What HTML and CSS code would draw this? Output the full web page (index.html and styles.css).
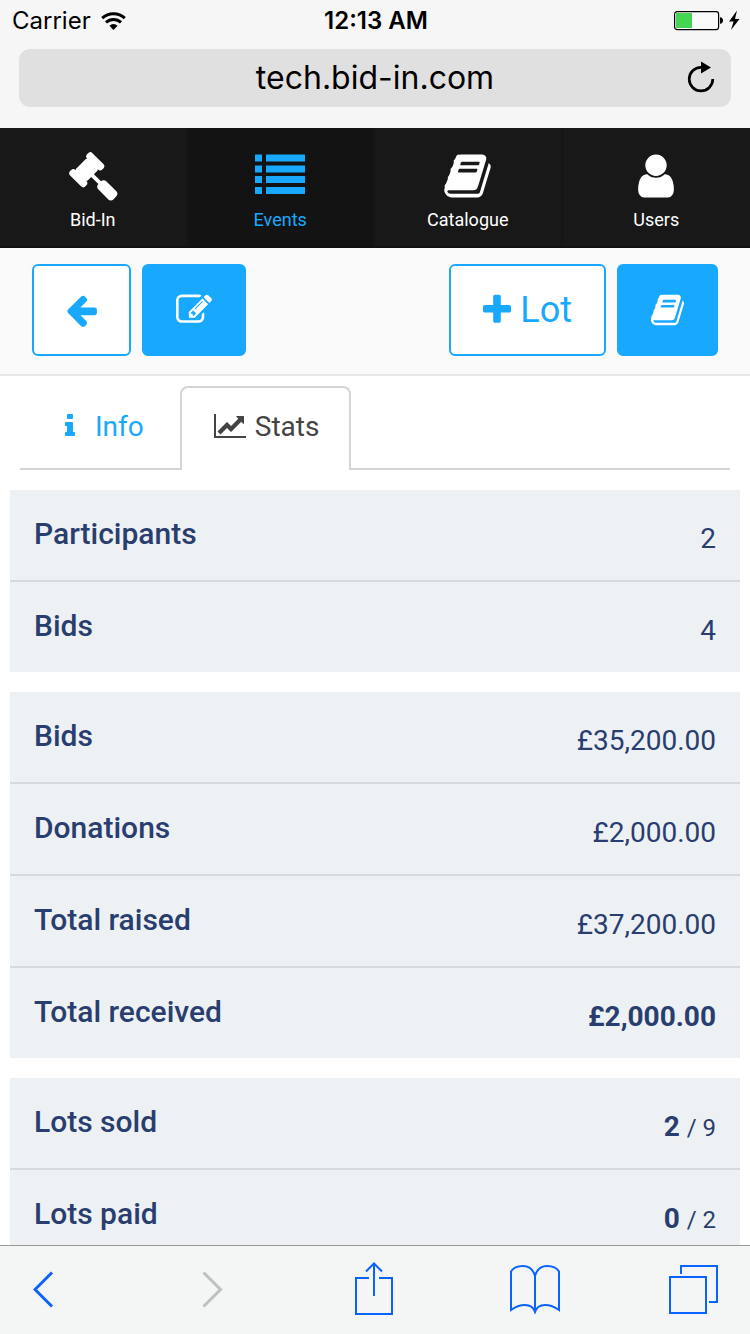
FILE: index.html
```html
<!DOCTYPE html>
<html lang="en">
<head>
<meta charset="utf-8">
<meta name="viewport" content="width=device-width, initial-scale=1">
<title>Bid-In – Event stats</title>
<link rel="stylesheet" href="styles.css">
</head>
<body>
<svg class="sprite" aria-hidden="true">
  <symbol id="book" viewBox="64 0 1664 1792"><path d="M1703 478q40 57 18 129l-275 906q-19 64-76.5 107.5t-122.5 43.5h-923q-77 0-148.5-53.5t-99.5-131.5q-24-67-2-127 0-4 3-27t4-37q1-8-3-21.5t-3-19.5q2-11 8-21t16.5-23.5 16.5-23.5q23-38 45-91.5t30-91.5q3-10 .5-30t-.5-28q3-11 17-28t17-23q21-36 42-92t25-90q1-9-2.5-32t.5-28q4-13 22-30.5t22-22.5q19-26 42.5-84.5t27.5-96.5q1-8-3-25.5t-2-26.5q2-8 9-18t18-23 17-21q8-12 16.5-30.5t15-35 16-36 19.5-32 26.5-23.5 36-11.5 47.5 5.5l-1 3q38-9 51-9h761q74 0 114 56t18 130l-274 906q-36 119-71.5 153.5t-128.5 34.5h-869q-27 0-38 15-11 16-1 43 24 70 144 70h923q29 0 56-15.5t35-41.5l300-987q7-22 5-57 38 15 59 43zm-1064 2q-4 13 2 22.5t20 9.5h608q13 0 25.5-9.5t16.5-22.5l21-64q4-13-2-22.5t-20-9.5h-608q-13 0-25.5 9.5t-16.5 22.5zm-83 256q-4 13 2 22.5t20 9.5h608q13 0 25.5-9.5t16.5-22.5l21-64q4-13-2-22.5t-20-9.5h-608q-13 0-25.5 9.5t-16.5 22.5z"/></symbol>
</svg>

<header class="browser-top">
  <div class="status">
    <span class="status-left">Carrier
      <svg width="25" height="18" viewBox="0 0 25 18" aria-hidden="true"><g fill="none" stroke="#000" stroke-width="3"><path d="M1.2 6.2a16.4 16.4 0 0 1 22.6 0"/><path d="M5 10.4a11 11 0 0 1 15 0"/></g><path d="M12.5 18l-4.1-4.3a6 6 0 0 1 8.2 0z"/></svg>
    </span>
    <span class="status-time">12:13 AM</span>
    <span class="status-right">
      <svg width="66" height="21" viewBox="0 0 66 21" aria-hidden="true"><rect x=".6" y="1.6" width="44" height="18" rx="2.5" fill="#fff" fill-opacity=".4" stroke="#000" stroke-width="1.2"/><path fill="#45d552" d="M2 3h16v15H2z"/><path d="M46 7.2q3 .3 3 3.3t-3 3.3z"/><path d="M63 .5L55 11.5h4.6L57 20l8.500-11H61z"/></svg>
    </span>
  </div>
  <div class="address">
    <span class="url">tech.bid-in.com</span>
    <button class="plain reload" aria-label="Reload"><svg width="28" height="32" viewBox="0 0 28 32" aria-hidden="true"><path d="M14 6.300A11.800 11.800 0 1 0 25.800 18.100" fill="none" stroke="#000" stroke-width="2.700"/><path d="M14 .5v12L24 6.500z"/></svg></button>
  </div>
</header>

<nav class="nav">
  <a href="#"><svg width="50" height="50" viewBox="0 0 1792 1792" aria-hidden="true"><path d="M1771 1536q0 53-37 90l-107 108q-39 37-91 37-53 0-90-37l-363-364q-38-36-38-90 0-53 43-96l-256-256-126 126q-14 14-34 14t-34-14q2 2 12.500 12t12.500 13 10 11.500 10 13.500 6 13.500 5.500 16.500 1.500 18q0 38-28 68-3 3-16.500 18t-19 20.500-18.500 16.500-22 15.500-22 9-26 4.500q-40 0-68-28l-408-408q-28-28-28-68 0-13 4.500-26t9-22 15.500-22 16.500-18.500 20.500-19 18-16.500q30-28 68-28 10 0 18 1.500t16.500 5.500 13.500 6 13.500 10 11.500 10 13 12.500 12 12.500q-14-14-14-34t14-34l348-348q14-14 34-14t34 14q-2-2-12.500-12t-12.500-13-10-11.500-10-13.500-6-13.500-5.500-16.500-1.500-18q0-38 28-68 3-3 16.500-18t19-20.500 18.500-16.500 22-15.500 22-9 26-4.500q40 0 68 28l408 408q28 28 28 68 0 13-4.500 26t-9 22-15.500 22-16.500 18.500-20.500 19-18 16.500q-30 28-68 28-10 0-18-1.500t-16.500-5.500-13.500-6-13.500-10-11.500-10-13-12.500-12-12.500q14 14 14 34t-14 34l-126 126 256 256q43-43 96-43 52 0 91 37l363 363q37 39 37 91z"/></svg>Bid-In</a>
  <a href="#" class="active" aria-current="page"><svg width="50" height="50" viewBox="0 0 50 50" aria-hidden="true"><path d="M0 3.500h7v7H0zM11 3.500h39v7H11zM0 14.500h7v7H0zM11 14.500h39v7H11zM0 25h7v7H0zM11 25h39v7H11zM0 36h7v7H0zM11 36h39v7H11z"/></svg>Events</a>
  <a href="#"><svg width="47" height="50" aria-hidden="true"><use href="#book"/></svg>Catalogue</a>
  <a href="#"><svg width="50" height="50" viewBox="0 0 1792 1792" aria-hidden="true"><path d="M1536 1399q0 109-62.500 187t-150.500 78h-854q-88 0-150.500-78t-62.500-187q0-85 8.500-160.500t31.500-152 58.500-131 94-89 134.500-34.500q131 128 313 128t313-128q76 0 134.500 34.500t94 89 58.500 131 31.500 152 8.500 160.500zm-256-887q0 159-112.500 271.500t-271.500 112.500-271.500-112.500-112.500-271.500 112.500-271.500 271.500-112.500 271.500 112.500 112.500 271.500z"/></svg>Users</a>
</nav>

<div class="actions">
  <button class="btn outline" aria-label="Back"><svg width="31" height="36" viewBox="128 0 1536 1792" aria-hidden="true"><path d="M1664 896v128q0 53-32.500 90.500t-84.500 37.500h-704l293 294q38 36 38 90t-38 90l-75 76q-37 37-90 37-52 0-91-37l-651-652q-37-37-37-90 0-52 37-91l651-650q38-38 91-38 52 0 90 38l75 74q38 38 38 91t-38 91l-293 293h704q52 0 84.500 37.500t32.500 90.500z"/></svg></button>
  <button class="btn" aria-label="Edit"><svg width="36" height="36" viewBox="0 0 1792 1792" aria-hidden="true"><path d="M888 1184l116-116-152-152-116 116v56h96v96h56zm440-720q-16-16-33 1l-350 350q-17 17-1 33t33-1l350-350q17-17 1-33zm80 594v190q0 119-84.500 203.500t-203.500 84.500h-832q-119 0-203.500-84.500t-84.500-203.500v-832q0-119 84.500-203.500t203.500-84.500h832q63 0 117 25 15 7 18 23 3 17-9 29l-49 49q-14 14-32 8-23-6-45-6h-832q-66 0-113 47t-47 113v832q0 66 47 113t113 47h832q66 0 113-47t47-113v-126q0-13 9-22l64-64q15-15 35-7t20 29zm-96-738l288 288-672 672h-288v-288zm444 132l-92 92-288-288 92-92q28-28 68-28t68 28l152 152q28 28 28 68t-28 68z"/></svg></button>
  <button class="btn outline push"><svg width="28" height="36" viewBox="192 0 1408 1792" aria-hidden="true"><path d="M1600 736v192q0 40-28 68t-68 28h-416v416q0 40-28 68t-68 28h-192q-40 0-68-28t-28-68v-416h-416q-40 0-68-28t-28-68v-192q0-40 28-68t68-28h416v-416q0-40 28-68t68-28h192q40 0 68 28t28 68v416h416q40 0 68 28t28 68z"/></svg>Lot</button>
  <button class="btn" aria-label="Catalogue"><svg width="33" height="36" aria-hidden="true"><use href="#book"/></svg></button>
</div>

<main class="content">
  <div class="tabs" role="tablist">
    <a href="#" class="tab" role="tab" aria-selected="false"><svg width="36" height="28" viewBox="-256 0 2304 1792" aria-hidden="true"><path d="M1216 1344v128q0 26-19 45t-45 19h-512q-26 0-45-19t-19-45v-128q0-26 19-45t45-19h64v-384h-64q-26 0-45-19t-19-45v-128q0-26 19-45t45-19h384q26 0 45 19t19 45v576h64q26 0 45 19t19 45zm-128-1152v192q0 26-19 45t-45 19h-256q-26 0-45-19t-19-45v-192q0-26 19-45t45-19h256q26 0 45 19t19 45z"/></svg>Info</a>
    <a href="#" class="tab current" role="tab" aria-selected="true"><svg width="36" height="28" viewBox="-128 0 2304 1792" aria-hidden="true"><path d="M2048 1536v128h-2048v-1536h128v1408h1920zm-128-1248v435q0 21-19.500 29.500t-35.500-7.500l-121-121-633 633q-10 10-23 10t-23-10l-233-233-416 416-192-192 585-585q10-10 23-10t23 10l233 233 464-464-121-121q-16-16-7.500-35.500t29.500-19.500h435q14 0 23 9t9 23z"/></svg>Stats</a>
  </div>

  <dl class="group">
    <div class="row"><dt>Participants</dt><dd>2</dd></div>
    <div class="row"><dt>Bids</dt><dd>4</dd></div>
  </dl>
  <dl class="group">
    <div class="row"><dt>Bids</dt><dd>£35,200.00</dd></div>
    <div class="row"><dt>Donations</dt><dd>£2,000.00</dd></div>
    <div class="row"><dt>Total raised</dt><dd>£37,200.00</dd></div>
    <div class="row"><dt>Total received</dt><dd><strong>£2,000.00</strong></dd></div>
  </dl>
  <dl class="group">
    <div class="row"><dt>Lots sold</dt><dd><strong>2</strong> <small>/ 9</small></dd></div>
    <div class="row"><dt>Lots paid</dt><dd><strong>0</strong> <small>/ 2</small></dd></div>
  </dl>
</main>

<footer class="toolbar">
  <button class="plain" aria-label="Back"><svg width="21" height="50" viewBox="0 0 21 50" aria-hidden="true"><path d="M19 8.500L2 25.500l17 17"/></svg></button>
  <button class="plain" aria-label="Forward" disabled><svg width="21" height="50" viewBox="0 0 21 50" aria-hidden="true"><path d="M1.500 8.500L18.500 25.500l-17 17"/></svg></button>
  <button class="plain" aria-label="Share"><svg class="thin" width="38" height="54" viewBox="0 0 38 54" aria-hidden="true"><path d="M14 16H1v36h36V16H24M19 34V2M11 9.500l8-8 8 8"/></svg></button>
  <button class="plain" aria-label="Bookmarks"><svg class="thin" width="50" height="50" viewBox="0 0 50 50" aria-hidden="true"><path d="M25 48V12C23 5 18 2 13 2 8 2 3 4 1 7.500V46C5 43 10 41 15 41 20 41 23.500 43 25 48 26.500 43 30 41 35 41 40 41 45 43 49 46V7.500C47 4 42 2 37 2 32 2 27 5 25 12"/></svg></button>
  <button class="plain" aria-label="Tabs"><svg class="thin" width="49" height="50" viewBox="0 0 49 50" aria-hidden="true"><path d="M1 13h36v36H1zM12 10V2h36v36h-8"/></svg></button>
</footer>
</body>
</html>
```
FILE: styles.css
```css
* { box-sizing: border-box; }

body {
  margin: 0;
  height: 100vh;
  display: flex;
  flex-direction: column;
  overflow: hidden;
  background: #fff;
  font-family: Roboto, "Liberation Sans", sans-serif;
}

svg { display: block; flex: none; fill: currentColor; }
.sprite { position: absolute; width: 0; height: 0; }
a { color: inherit; text-decoration: none; }
button { font: inherit; cursor: pointer; }
.plain { padding: 0; border: 0; background: none; color: inherit; }

/* Browser chrome */
.browser-top {
  flex: none;
  padding-bottom: 21px;
  background: #f6f6f6;
  color: #000;
  font-family: Inter, "Liberation Sans", sans-serif;
}
.status {
  display: grid;
  grid-template-columns: 1fr auto 1fr;
  align-items: center;
  height: 41px;
  padding: 0 10px 0 12px;
  font-size: 24px;
}
.status-left { display: flex; align-items: center; gap: 10px; }
.status-time { font-weight: 600; }
.status-right { justify-self: end; }
.address {
  display: grid;
  grid-template-columns: 1fr auto 1fr;
  align-items: center;
  height: 58px;
  margin: 8px 19px 0;
  padding: 0 16px 2px;
  border-radius: 11px;
  background: #e0e0e0;
  font-size: 32px;
}
.url { grid-column: 2; }
.reload { justify-self: end; }

/* Main navigation */
.nav {
  flex: none;
  display: grid;
  grid-template-columns: repeat(4, 1fr);
  height: 120px;
  background: #181818;
  color: #fff;
  font-size: 18px;
  line-height: 24px;
}
.nav a {
  display: flex;
  flex-direction: column;
  align-items: center;
  gap: 7px;
  padding-top: 23px;
  border-right: 2px solid #151515;
  border-bottom: 2px solid #101010;
}
.nav a:last-child { border-right: 0; }
.nav .active { background: #131313; color: #18a9ff; }

/* Action buttons */
.actions {
  flex: none;
  display: flex;
  gap: 11px;
  padding: 16px 32px 18px;
  border-bottom: 2px solid #e7e7e7;
  background: #fafafa;
}
.btn {
  display: flex;
  align-items: center;
  gap: 9px;
  height: 92px;
  padding: 0 32px 1px;
  border: 2px solid #18a9ff;
  border-radius: 6px;
  background: #18a9ff;
  color: #fff;
  font-size: 36px;
}
.btn.outline { background: #fff; color: #18a9ff; }
.push { margin-left: auto; }

/* Tabs */
.content { flex: 1; min-height: 0; overflow: hidden; padding: 10px 10px 0; }
.tabs {
  display: flex;
  margin: 0 10px 20px;
  box-shadow: inset 0 -2px #d5d5d5;
}
.tab {
  display: flex;
  align-items: center;
  gap: 7px;
  height: 84px;
  padding: 0 30px 6px;
  border: 2px solid transparent;
  border-bottom: 0;
  border-radius: 8px 8px 0 0;
  margin-right: 4px;
  color: #18a9ff;
  font-size: 28px;
}
.tab.current { border-color: #d5d5d5; background: #fff; color: #444; }

/* Stats */
.group { margin: 0 0 20px; background: #edf1f4; color: #293e6e; }
.row {
  display: flex;
  justify-content: space-between;
  height: 90px;
  padding: 0 24px;
  font-size: 28px;
  line-height: 98px;
}
.row + .row { height: 92px; border-top: 2px solid #d5dade; }
dt { font-size: 30px; font-weight: 500; line-height: 88px; }
dd { margin: 0; }
strong { font-weight: 700; }
small { font-size: 24px; }

/* Bottom toolbar */
.toolbar {
  flex: none;
  display: grid;
  grid-template-columns: 169fr 153fr 155fr 159fr 49fr;
  align-items: center;
  justify-items: start;
  height: 89px;
  padding: 0 32px 2px 33px;
  border-top: 1px solid #979a9b;
  background: #f4f5f5;
  color: #0b63ff;
}
.toolbar svg { fill: none; stroke: currentColor; stroke-width: 3; }
.toolbar .thin { stroke-width: 2; }
.toolbar button:disabled { color: #bfc0c1; }
```
